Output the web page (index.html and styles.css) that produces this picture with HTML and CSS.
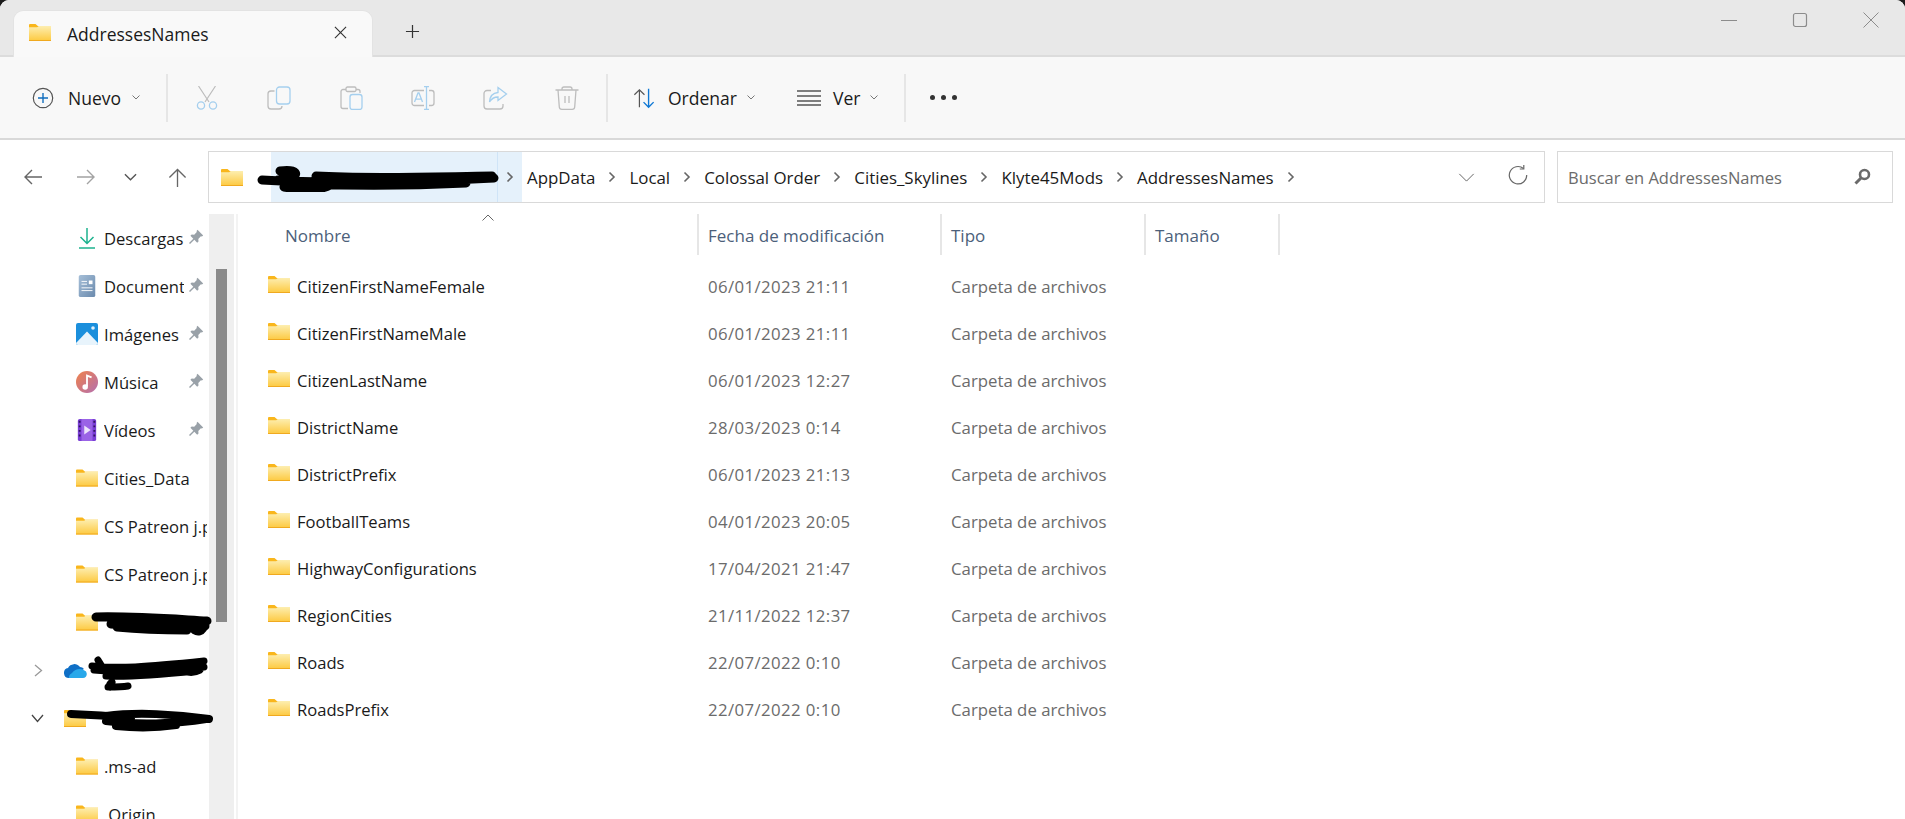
FILE: index.html
```html
<!DOCTYPE html>
<html lang="es">
<head>
    <meta charset="UTF-8">
    <meta name="viewport" content="width=device-width, initial-scale=1.0">
    <title>AddressesNames</title>
    <link rel="stylesheet" href="styles.css">
</head>
<body>
    <svg class="defs" width="0" height="0">
        <defs>
            <linearGradient id="folderFill" x1="0" y1="0" x2="0" y2="1">
                <stop offset="0" stop-color="#fdeeb0"/>
                <stop offset="1" stop-color="#fdc93f"/>
            </linearGradient>
            <symbol id="folder" viewBox="0 0 22 17">
                <path d="M0 1.2C0 .5.5 0 1.2 0h5.3l2.6 2.2H22V6H0z" fill="#f9b61c"/>
                <path d="M0 3.2h8.2L10 2h12v15H0z" fill="url(#folderFill)"/>
                <path d="M0 16h22v1H0z" fill="#f0a91f"/>
            </symbol>
            <symbol id="pin" viewBox="0 0 16 16">
                <path d="M9.5.8l5.7 5.7-1.3 1.1-1-.3-2.6 2.6.2 2.5-1.3 1.3-2.9-2.9L2 15l-1-1 4.3-4.3-2.9-2.9 1.3-1.3 2.5.2 2.6-2.6-.2-1z" fill="#99a1a8"/>
            </symbol>
            <symbol id="chev-down" viewBox="0 0 8 5">
                <path d="M.5.5L4 4 7.5.5" fill="none" stroke="#777" stroke-width="1"/>
            </symbol>
            <symbol id="chev-right" viewBox="0 0 8 12">
                <path d="M1.5 1.5L6 6l-4.5 4.5" fill="none" stroke="#666" stroke-width="1.6"/>
            </symbol>
        </defs>
    </svg>

    <div class="window">
        <div class="titlebar">
            <div class="tab">
                <svg class="tab-folder"><use href="#folder"/></svg>
                <span class="tab-title">AddressesNames</span>
                <svg class="tab-close" viewBox="0 0 14 14"><path d="M1 1l12 12M13 1L1 13" stroke="#333" stroke-width="1.2"/></svg>
            </div>
            <svg class="tab-new" viewBox="0 0 16 16"><path d="M8 1v14M1 8h14" stroke="#333" stroke-width="1.3"/></svg>
            <div class="win-controls">
                <svg class="win-btn" viewBox="0 0 16 16"><path d="M0 8.500h16" stroke="#8c8c8c" stroke-width="1"/></svg>
                <svg class="win-btn" viewBox="0 0 16 16"><rect x="1.500" y="1.500" width="13" height="13" rx="2" fill="none" stroke="#8c8c8c" stroke-width="1.200"/></svg>
                <svg class="win-btn" viewBox="0 0 16 16"><path d="M.5.5l15 15M15.500.5l-15 15" stroke="#8c8c8c" stroke-width="1"/></svg>
            </div>
        </div>

        <div class="toolbar">
            <div class="tool-group nuevo">
                <svg class="tool-icon" viewBox="0 0 24 24">
                    <circle cx="12" cy="12" r="10.600" fill="none" stroke="#555" stroke-width="1.300"/>
                    <path d="M12 6.500v11M6.500 12h11" stroke="#0f6cbd" stroke-width="1.500"/>
                </svg>
                <span>Nuevo</span>
                <svg class="caret"><use href="#chev-down"/></svg>
            </div>
            <div class="tool-sep"></div>
            <div class="tool-actions">
                <svg class="action" viewBox="0 0 24 24">
                    <path d="M3.500 0l10.500 16M20.500 0L10 16" fill="none" stroke="#bdbdbd" stroke-width="1.200"/>
                    <circle cx="6" cy="19.500" r="3.600" fill="none" stroke="#a5cfee" stroke-width="1.300"/>
                    <circle cx="18" cy="19.500" r="3.600" fill="none" stroke="#a5cfee" stroke-width="1.300"/>
                </svg>
                <svg class="action" viewBox="0 0 24 24">
                    <path d="M7.500 5H4A3 3 0 0 0 1 8v12a3 3 0 0 0 3 3h8a3 3 0 0 0 3-3" fill="none" stroke="#bdbdbd" stroke-width="1.300"/>
                    <rect x="9.500" y="1" width="13.500" height="17" rx="3" fill="none" stroke="#a5cfee" stroke-width="1.300"/>
                </svg>
                <svg class="action" viewBox="0 0 24 24">
                    <path d="M7 3.500H4A2 2 0 0 0 2 5.500v15a2 2 0 0 0 2 2h5M17 3.500h2a2 2 0 0 1 2 2V7" fill="none" stroke="#bdbdbd" stroke-width="1.300"/>
                    <rect x="7" y="1" width="10" height="4.500" rx="1.500" fill="none" stroke="#bdbdbd" stroke-width="1.300"/>
                    <rect x="11" y="8.500" width="12" height="15" rx="2.500" fill="none" stroke="#a5cfee" stroke-width="1.300"/>
                </svg>
                <svg class="action" viewBox="0 0 24 24">
                    <path d="M13 4.500H3.500A2.500 2.500 0 0 0 1 7v10a2.500 2.500 0 0 0 2.500 2.500H13M18 4.500h2.500A2.500 2.500 0 0 1 23 7v10a2.500 2.500 0 0 1-2.500 2.500H18" fill="none" stroke="#bdbdbd" stroke-width="1.300"/>
                    <path d="M13 .7h5M13 23.300h5M15.500.7v22.600M3.500 16l3.500-9h1l3.500 9M4.700 13.200h5.600" fill="none" stroke="#a5cfee" stroke-width="1.300"/>
                </svg>
                <svg class="action" viewBox="0 0 24 24">
                    <path d="M8 4.500H4a3 3 0 0 0-3 3V20a3 3 0 0 0 3 3h13a3 3 0 0 0 3-3v-2" fill="none" stroke="#bdbdbd" stroke-width="1.300"/>
                    <path d="M15 1.500L23.500 8 15 14.500V11c-4 0-6.500 1.500-8.500 5 .3-5.500 3.500-9 8.500-9.500z" fill="none" stroke="#a5cfee" stroke-width="1.300"/>
                </svg>
                <svg class="action" viewBox="0 0 24 24">
                    <path d="M.5 4h23M7 4V3a2 2 0 0 1 2-2h6a2 2 0 0 1 2 2v1M3 4l1.300 17a2.500 2.500 0 0 0 2.500 2.300h10.400a2.500 2.500 0 0 0 2.500-2.300L21 4M10 10v7M14 10v7" fill="none" stroke="#bdbdbd" stroke-width="1.300"/>
                </svg>
            </div>
            <div class="tool-sep"></div>
            <div class="tool-group ordenar">
                <svg class="tool-icon sort-icon" viewBox="0 0 24 24">
                    <path d="M7 22V3M1.500 8.500L7 3l5.500 5.500" fill="none" stroke="#555" stroke-width="1.300"/>
                    <path d="M17 2v20M11.500 16.500L17 22l5.500-5.500" fill="none" stroke="#0f78d4" stroke-width="1.500"/>
                </svg>
                <span>Ordenar</span>
                <svg class="caret"><use href="#chev-down"/></svg>
            </div>
            <div class="tool-group ver">
                <svg class="lines-icon" viewBox="0 0 24 16">
                    <path d="M0 1h24M0 6h24M0 11h24M0 15h24" stroke="#555" stroke-width="1.300"/>
                </svg>
                <span>Ver</span>
                <svg class="caret"><use href="#chev-down"/></svg>
            </div>
            <div class="tool-sep"></div>
            <div class="dots"><i></i><i></i><i></i></div>
        </div>

        <div class="addressrow">
            <svg class="nav back" viewBox="0 0 18 16"><path d="M18 8H1.500M8 1L1 8l7 7" fill="none" stroke="#666" stroke-width="1.400"/></svg>
            <svg class="nav forward" viewBox="0 0 18 16"><path d="M0 8h16.500M10 1l7 7-7 7" fill="none" stroke="#a3a3a3" stroke-width="1.400"/></svg>
            <svg class="nav recent" viewBox="0 0 14 8"><path d="M1 1l6 6 6-6" fill="none" stroke="#555" stroke-width="1.500"/></svg>
            <svg class="nav up" viewBox="0 0 20 20"><path d="M10 20V1.500M1.500 10L10 1.500l8.500 8.500" fill="none" stroke="#666" stroke-width="1.400"/></svg>

            <div class="addressbar">
                <svg class="addr-folder"><use href="#folder"/></svg>
                <div class="root-crumb">
                    <div class="root-name">
                        <svg class="scribble addr-scribble" viewBox="0 0 243 27" preserveAspectRatio="none">
                            <path d="M6 15C60 18 150 18 238 13M24 6C48 3 42 15 22 15M28 22C50 26 65 25 74 20M60 11c50 3 110 1 176 0M50 19c50 2 100 2 160-1" fill="none" stroke="#000" stroke-width="9" stroke-linecap="round"/>
                        </svg>
                    </div>
                    <div class="root-arrow"><svg class="crumb-sep"><use href="#chev-right"/></svg></div>
                </div>
                <span class="crumb first">AppData</span>
                <svg class="crumb-sep"><use href="#chev-right"/></svg>
                <span class="crumb">Local</span>
                <svg class="crumb-sep"><use href="#chev-right"/></svg>
                <span class="crumb">Colossal Order</span>
                <svg class="crumb-sep"><use href="#chev-right"/></svg>
                <span class="crumb">Cities_Skylines</span>
                <svg class="crumb-sep"><use href="#chev-right"/></svg>
                <span class="crumb">Klyte45Mods</span>
                <svg class="crumb-sep"><use href="#chev-right"/></svg>
                <span class="crumb">AddressesNames</span>
                <svg class="crumb-sep"><use href="#chev-right"/></svg>
                <svg class="addr-down" viewBox="0 0 18 10"><path d="M1 1l8 8 8-8" fill="none" stroke="#666" stroke-width="1.100"/></svg>
                <svg class="addr-refresh" viewBox="0 0 20 20">
                    <path d="M15.500 3.500A8.700 8.700 0 1 0 18.700 10" fill="none" stroke="#666" stroke-width="1.200"/>
                    <path d="M15.800 0v4h-4" fill="none" stroke="#666" stroke-width="1.200"/>
                </svg>
            </div>

            <div class="searchbox">
                <span>Buscar en AddressesNames</span>
                <svg class="search-icon" viewBox="0 0 17 17">
                    <circle cx="10.500" cy="6.500" r="4.500" fill="none" stroke="#6a6a6a" stroke-width="2.600"/>
                    <path d="M7 10l-5.500 5.500" stroke="#6a6a6a" stroke-width="3"/>
                </svg>
            </div>
        </div>

        <div class="content">
            <div class="sidebar">
                <div class="nav-item">
                    <svg class="nav-icon" viewBox="0 0 22 22"><path d="M11 1v15M4.500 10l6.500 6.500 6.500-6.500" fill="none" stroke="#1db28e" stroke-width="1.500"/><path d="M3 21h16" stroke="#1db28e" stroke-width="1.500"/></svg>
                    <span class="nav-label pinned">Descargas</span>
                    <svg class="nav-pin"><use href="#pin"/></svg>
                </div>
                <div class="nav-item">
                    <svg class="nav-icon" viewBox="0 0 22 24">
                        <defs><linearGradient id="docFill" x1="0" y1="0" x2="1" y2="1"><stop offset="0" stop-color="#a6bfd8"/><stop offset="1" stop-color="#6a8aad"/></linearGradient></defs>
                        <rect x="2" y="0" width="18" height="24" rx="2" fill="url(#docFill)"/>
                        <path d="M5 7h6M5 10h6M5 14h12M5 17h12" stroke="#fff" stroke-width="1"/><rect x="13" y="6" width="4" height="4" fill="#fff"/>
                    </svg>
                    <span class="nav-label pinned">Documentos</span>
                    <svg class="nav-pin"><use href="#pin"/></svg>
                </div>
                <div class="nav-item">
                    <svg class="nav-icon" viewBox="0 0 22 22">
                        <rect width="22" height="22" rx="2" fill="#1b8fdc"/>
                        <path d="M0 20L11 8.500 22 20v0a2 2 0 0 1-2 2H2a2 2 0 0 1-2-2z" fill="#e8f4fc"/>
                        <circle cx="17" cy="5" r="1.800" fill="#dff0fb"/>
                    </svg>
                    <span class="nav-label pinned">Imágenes</span>
                    <svg class="nav-pin"><use href="#pin"/></svg>
                </div>
                <div class="nav-item">
                    <svg class="nav-icon" viewBox="0 0 24 24">
                        <defs><linearGradient id="musicFill" x1="0" y1="0" x2="1" y2="1"><stop offset="0" stop-color="#f0824a"/><stop offset="1" stop-color="#b36fb0"/></linearGradient></defs>
                        <circle cx="12" cy="12" r="12" fill="url(#musicFill)"/>
                        <circle cx="10" cy="17.500" r="3" fill="#fff"/>
                        <path d="M12 17V5l5 2" fill="none" stroke="#fff" stroke-width="2"/>
                    </svg>
                    <span class="nav-label pinned">Música</span>
                    <svg class="nav-pin"><use href="#pin"/></svg>
                </div>
                <div class="nav-item">
                    <svg class="nav-icon" viewBox="0 0 20 24">
                        <rect width="20" height="24" rx="2" fill="#7a3fd6"/>
                        <rect x="4" y="0" width="12" height="24" fill="#9a63e6"/>
                        <path d="M1 3h2M1 8h2M1 13h2M1 18h2M17 3h2M17 8h2M17 13h2M17 18h2" stroke="#32135f" stroke-width="2"/>
                        <path d="M7 7l7 5-7 5z" fill="#ece4fb"/>
                    </svg>
                    <span class="nav-label pinned">Vídeos</span>
                    <svg class="nav-pin"><use href="#pin"/></svg>
                </div>
                <div class="nav-item">
                    <svg class="nav-icon"><use href="#folder"/></svg>
                    <span class="nav-label">Cities_Data</span>
                </div>
                <div class="nav-item">
                    <svg class="nav-icon"><use href="#folder"/></svg>
                    <span class="nav-label">CS Patreon j.p.</span>
                </div>
                <div class="nav-item">
                    <svg class="nav-icon"><use href="#folder"/></svg>
                    <span class="nav-label">CS Patreon j.p.</span>
                </div>
                <div class="nav-item">
                    <svg class="nav-icon"><use href="#folder"/></svg>
                    <svg class="scribble side-one" viewBox="0 0 122 28" preserveAspectRatio="none">
                        <path d="M5 7C40 6 80 9 116 11M20 14c30 2 60 4 94 2M104 20c3 2 6 1 8-2M30 8c20 0 40 3 60 3M26 17c20 2 40 3 70 3" fill="none" stroke="#000" stroke-width="9" stroke-linecap="round"/>
                    </svg>
                </div>
                <div class="nav-item root">
                    <svg class="tree-chev" viewBox="0 0 9 13"><path d="M1 1l6.500 5.500L1 12" fill="none" stroke="#999" stroke-width="1.300"/></svg>
                    <svg class="root-icon" viewBox="0 0 24 16">
                        <path d="M6 16a5 5 0 0 1-1-9.900A7 7 0 0 1 17 5a5 5 0 0 1 4 2z" fill="#0f6fc6"/>
                        <path d="M6 16h14a4 4 0 0 0 1-7.800C17 6 12 7 9 11c-1 1-3 1-3 5z" fill="#28a8ea"/>
                    </svg>
                    <svg class="scribble side-two" viewBox="0 0 124 36" preserveAspectRatio="none">
                        <path d="M6 11C30 14 60 12 118 6M12 5c3 5 5 9 8 11M8 15c30 3 80 0 110-3M20 21c20 1 60-2 90-5M102 17c4 1 8 0 12-2M22 32c8 0 14 0 20-1M26 27c-3 2-3 3-2 5" fill="none" stroke="#000" stroke-width="7" stroke-linecap="round"/>
                    </svg>
                </div>
                <div class="nav-item root">
                    <svg class="tree-chev down" viewBox="0 0 13 9"><path d="M1 1l5.500 6.500L12 1" fill="none" stroke="#444" stroke-width="1.300"/></svg>
                    <svg class="root-icon root-folder"><use href="#folder"/></svg>
                    <svg class="scribble side-three" viewBox="0 0 148 24" preserveAspectRatio="none">
                        <path d="M5 6c30 1 40 2 60 4M40 8c30-4 70-2 103 3M40 13c30 4 70 3 100-2M50 18c20 2 40 2 60-1" fill="none" stroke="#000" stroke-width="8" stroke-linecap="round"/>
                    </svg>
                </div>
                <div class="nav-item">
                    <svg class="nav-icon"><use href="#folder"/></svg>
                    <span class="nav-label">.ms-ad</span>
                </div>
                <div class="nav-item">
                    <svg class="nav-icon"><use href="#folder"/></svg>
                    <span class="nav-label">.Origin</span>
                </div>
            </div>

            <div class="side-scroll"><div class="side-thumb"></div></div>

            <div class="files">
                <div class="file-head">
                    <div class="head-cell name-col">Nombre
                        <svg class="sort-caret" viewBox="0 0 12 7"><path d="M.5 6.500L6 1l5.500 5.500" fill="none" stroke="#666" stroke-width="1"/></svg>
                    </div>
                    <div class="head-cell">Fecha de modificación</div>
                    <div class="head-cell">Tipo</div>
                    <div class="head-cell last">Tamaño</div>
                </div>
                <div class="file-row"><div class="file-name"><svg class="file-icon"><use href="#folder"/></svg>CitizenFirstNameFemale</div><div class="file-date">06/01/2023 21:11</div><div class="file-type">Carpeta de archivos</div></div>
                <div class="file-row"><div class="file-name"><svg class="file-icon"><use href="#folder"/></svg>CitizenFirstNameMale</div><div class="file-date">06/01/2023 21:11</div><div class="file-type">Carpeta de archivos</div></div>
                <div class="file-row"><div class="file-name"><svg class="file-icon"><use href="#folder"/></svg>CitizenLastName</div><div class="file-date">06/01/2023 12:27</div><div class="file-type">Carpeta de archivos</div></div>
                <div class="file-row"><div class="file-name"><svg class="file-icon"><use href="#folder"/></svg>DistrictName</div><div class="file-date">28/03/2023 0:14</div><div class="file-type">Carpeta de archivos</div></div>
                <div class="file-row"><div class="file-name"><svg class="file-icon"><use href="#folder"/></svg>DistrictPrefix</div><div class="file-date">06/01/2023 21:13</div><div class="file-type">Carpeta de archivos</div></div>
                <div class="file-row"><div class="file-name"><svg class="file-icon"><use href="#folder"/></svg>FootballTeams</div><div class="file-date">04/01/2023 20:05</div><div class="file-type">Carpeta de archivos</div></div>
                <div class="file-row"><div class="file-name"><svg class="file-icon"><use href="#folder"/></svg>HighwayConfigurations</div><div class="file-date">17/04/2021 21:47</div><div class="file-type">Carpeta de archivos</div></div>
                <div class="file-row"><div class="file-name"><svg class="file-icon"><use href="#folder"/></svg>RegionCities</div><div class="file-date">21/11/2022 12:37</div><div class="file-type">Carpeta de archivos</div></div>
                <div class="file-row"><div class="file-name"><svg class="file-icon"><use href="#folder"/></svg>Roads</div><div class="file-date">22/07/2022 0:10</div><div class="file-type">Carpeta de archivos</div></div>
                <div class="file-row"><div class="file-name"><svg class="file-icon"><use href="#folder"/></svg>RoadsPrefix</div><div class="file-date">22/07/2022 0:10</div><div class="file-type">Carpeta de archivos</div></div>
            </div>
        </div>
    </div>
</body>
</html>
```

FILE: styles.css
```css
* {
    box-sizing: border-box;
}
html, body {
    height: 100%;
}
body {
    margin: 0;
    overflow: hidden;
    background: #1c1c1c;
    color: #1a1a1a;
    font-family: "Open Sans", "Noto Sans", sans-serif;
    font-size: 16.6px;
}
svg {
    display: block;
    flex: none;
}
.defs {
    position: absolute;
}
.window {
    height: 100%;
    background: #fff;
    border-radius: 9px 9px 0 0;
    overflow: hidden;
    display: flex;
    flex-direction: column;
}

/* title bar */
.titlebar {
    height: 57px;
    flex: none;
    display: flex;
    align-items: flex-end;
    background: #e8e8e8;
    border-bottom: 2px solid #dcdcdc;
    padding-left: 13px;
}
.tab {
    width: 360px;
    height: 47px;
    margin-bottom: -2px;
    display: flex;
    align-items: center;
    background: #f9f9f9;
    border: 1px solid #e3e3e3;
    border-bottom: none;
    border-radius: 10px 10px 0 0;
    padding: 0 25px 3px 15px;
}
.tab-folder {
    width: 22px;
    height: 17px;
}
.tab-title {
    margin: 2px 0 0 16px;
    flex: 1;
    font-size: 17.5px;
    color: #1a1a1a;
}
.tab-close {
    width: 13px;
    height: 13px;
}
.tab-new {
    width: 15px;
    height: 15px;
    margin: 0 0 16px 32px;
}
.win-controls {
    margin-left: auto;
    align-self: flex-start;
    display: flex;
    gap: 55px;
    padding: 12px 26px 0 0;
}
.win-btn {
    width: 16px;
    height: 16px;
}

/* command bar */
.toolbar {
    height: 83px;
    flex: none;
    display: flex;
    align-items: center;
    background: #f8f8f8;
    border-bottom: 2px solid #d9d9d9;
    font-size: 17.5px;
}
.tool-group {
    display: flex;
    align-items: center;
    flex: none;
}
.tool-icon {
    width: 22px;
    height: 22px;
}
.caret {
    width: 8px;
    height: 5px;
}
.nuevo {
    width: 134px;
    margin-left: 32px;
    gap: 14px;
}
.nuevo .caret {
    margin-left: -3px;
}
.tool-sep {
    width: 2px;
    height: 48px;
    flex: none;
    background: #e6e6e6;
}
.tool-actions {
    display: flex;
    margin: 0 3px;
}
.action {
    width: 72px;
    height: 24px;
}
.ordenar {
    width: 165px;
    margin-left: 24px;
    gap: 12px;
}
.sort-icon {
    width: 24px;
}
.ordenar .caret, .ver .caret {
    margin-left: -2px;
}
.ver {
    width: 107px;
    gap: 12px;
}
.lines-icon {
    width: 24px;
    height: 16px;
}
.dots {
    margin-left: 24px;
    display: flex;
    gap: 6px;
}
.dots i {
    width: 5px;
    height: 5px;
    border-radius: 50%;
    background: #333;
}

/* address row */
.addressrow {
    height: 74px;
    flex: none;
    display: flex;
    align-items: center;
    padding: 0 12px 0 24px;
}
.nav {
    height: 16px;
}
.back, .forward {
    width: 18px;
}
.forward {
    margin-left: 35px;
}
.recent {
    width: 13px;
    height: 8px;
    margin-left: 29px;
}
.up {
    width: 19px;
    height: 19px;
    margin-left: 31px;
}
.addressbar {
    width: 1337px;
    height: 52px;
    margin-left: 21px;
    display: flex;
    align-items: center;
    border: 1px solid #d9d9d9;
    padding-left: 12px;
    font-size: 16.9px;
}
.addr-folder {
    width: 22px;
    height: 17px;
}
.root-crumb {
    display: flex;
    height: 50px;
    margin-left: 28px;
    background: #e5f1fb;
}
.root-name {
    width: 227px;
    position: relative;
    border-right: 1px solid #cfe4f7;
}
.root-arrow {
    width: 24px;
    display: flex;
    align-items: center;
}
.root-arrow .crumb-sep {
    margin: 0 0 0 8px;
}
.crumb-sep {
    width: 8px;
    height: 12px;
    margin: 0 13px;
}
.first {
    margin-left: 5px;
}
.crumb {
    white-space: nowrap;
}
.addr-down {
    width: 17px;
    height: 9px;
    margin-left: auto;
}
.addr-refresh {
    width: 20px;
    height: 20px;
    margin: -4px 16px 0 33px;
}
.searchbox {
    width: 336px;
    height: 52px;
    margin-left: 12px;
    display: flex;
    align-items: center;
    justify-content: space-between;
    border: 1px solid #d9d9d9;
    padding: 1px 21px 0 10px;
    color: #6b6b6b;
    font-size: 16.5px;
}
.search-icon {
    width: 17px;
    height: 17px;
    margin-top: -2px;
}

/* hand-drawn redactions, they lie over the row beneath */
.scribble {
    position: absolute;
}
.addr-scribble {
    left: -15px;
    top: 13px;
    width: 243px;
    height: 27px;
}

/* body */
.content {
    flex: 1;
    min-height: 0;
    display: flex;
}
.sidebar {
    width: 209px;
    flex: none;
}
.nav-item {
    height: 48px;
    display: flex;
    align-items: center;
    position: relative;
    padding-left: 76px;
}
.nav-icon {
    width: 22px;
    height: 22px;
}
.nav-label {
    margin-left: 6px;
    width: 103px;
    white-space: nowrap;
    overflow: hidden;
}
.nav-label.pinned {
    width: 80px;
}
.nav-pin {
    width: 16px;
    height: 16px;
    margin: -2px 0 0 4px;
}
.root {
    padding-left: 30px;
}
.tree-chev {
    width: 9px;
    height: 13px;
    margin: 0 0 0 4px;
}
.tree-chev.down {
    width: 13px;
    height: 9px;
    margin: 0 0 0 1px;
}
.root-icon {
    width: 24px;
    height: 16px;
    margin-left: 20px;
}
.root-folder {
    width: 22px;
    height: 17px;
}
.side-one {
    left: 91px;
    top: 12px;
    width: 122px;
    height: 28px;
}
.side-two {
    left: 86px;
    top: 9px;
    width: 124px;
    height: 36px;
}
.side-three {
    left: 66px;
    top: 14px;
    width: 148px;
    height: 24px;
}
.side-scroll {
    width: 25px;
    flex: none;
    background: #efefef;
    padding: 55px 7px 0;
}
.side-thumb {
    height: 353px;
    background: #8a8a8a;
}
.files {
    flex: 1;
    margin-left: 2px;
    border-left: 2px solid #f3f3f3;
}
.file-head {
    display: grid;
    grid-template-columns: 459px 243px 204px 136px;
    height: 49px;
}
.head-cell {
    height: 41px;
    display: flex;
    align-items: center;
    padding: 2px 0 0 9px;
    border-left: 2px solid #e6e6e6;
    color: #4c607a;
    font-size: 17px;
    position: relative;
}
.name-col {
    border-left: none;
    padding-left: 47px;
}
.head-cell.last {
    border-right: 2px solid #e6e6e6;
}
.sort-caret {
    position: absolute;
    left: 244px;
    top: 0;
    width: 12px;
    height: 7px;
}
.file-row {
    display: grid;
    grid-template-columns: 459px 243px 204px;
    height: 47px;
    align-items: center;
}
.file-name {
    display: flex;
    align-items: center;
    padding-left: 30px;
}
.file-icon {
    width: 22px;
    height: 17px;
    margin: -4px 7px 0 0;
}
.file-date, .file-type {
    padding-left: 11px;
    color: #6b6b6b;
    font-size: 16.8px;
}
.file-date {
    letter-spacing: .4px;
}
```
